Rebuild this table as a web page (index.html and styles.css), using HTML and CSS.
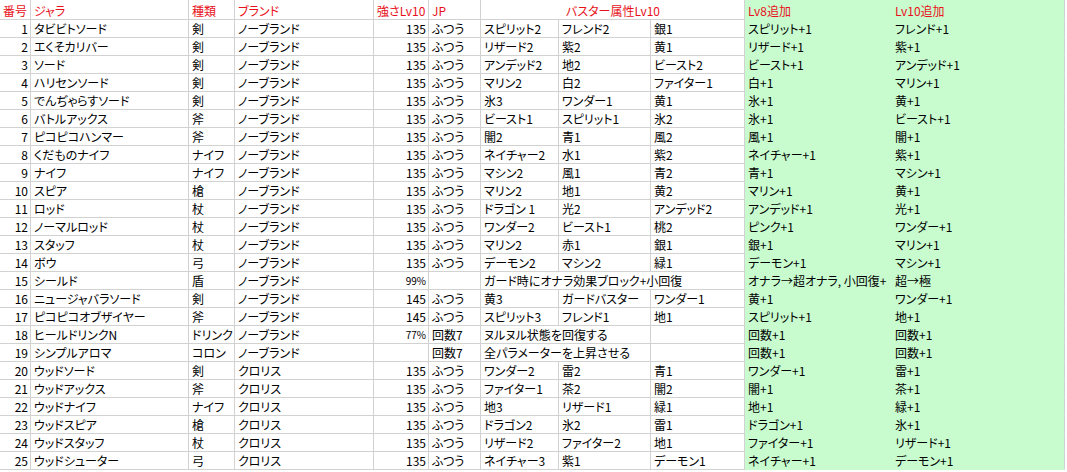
FILE: index.html
```html
<!DOCTYPE html>
<html lang="ja">
<head>
<meta charset="utf-8">
<title>ジャラ一覧</title>
<link rel="stylesheet" href="styles.css">
</head>
<body>
<div class="sheet">
  <div class="c h hd">番号</div><div class="c h hd">ジャラ</div><div class="c h hd">種類</div><div class="c h hd">ブランド</div><div class="c h hd">強さLv10</div><div class="c h hd">JP</div><div class="c h hd s3 ctr">バスター属性Lv10</div><div class="c h hd g">Lv8追加</div><div class="c h hd g last">Lv10追加</div>

  <div class="c r">1</div><div class="c">タビビトソード</div><div class="c">剣</div><div class="c">ノーブランド</div><div class="c r">135</div><div class="c">ふつう</div><div class="c">スピリット2</div><div class="c">フレンド2</div><div class="c">銀1</div><div class="c g">スピリット+1</div><div class="c g last">フレンド+1</div>
  <div class="c r">2</div><div class="c">エくそカリバー</div><div class="c">剣</div><div class="c">ノーブランド</div><div class="c r">135</div><div class="c">ふつう</div><div class="c">リザード2</div><div class="c">紫2</div><div class="c">黄1</div><div class="c g">リザード+1</div><div class="c g last">紫+1</div>
  <div class="c r">3</div><div class="c">ソード</div><div class="c">剣</div><div class="c">ノーブランド</div><div class="c r">135</div><div class="c">ふつう</div><div class="c">アンデッド2</div><div class="c">地2</div><div class="c">ビースト2</div><div class="c g">ビースト+1</div><div class="c g last">アンデッド+1</div>
  <div class="c r">4</div><div class="c">ハリセンソード</div><div class="c">剣</div><div class="c">ノーブランド</div><div class="c r">135</div><div class="c">ふつう</div><div class="c">マリン2</div><div class="c">白2</div><div class="c">ファイター1</div><div class="c g">白+1</div><div class="c g last">マリン+1</div>
  <div class="c r">5</div><div class="c">でんぢゃらすソード</div><div class="c">剣</div><div class="c">ノーブランド</div><div class="c r">135</div><div class="c">ふつう</div><div class="c">氷3</div><div class="c">ワンダー1</div><div class="c">黄1</div><div class="c g">氷+1</div><div class="c g last">黄+1</div>
  <div class="c r">6</div><div class="c">バトルアックス</div><div class="c">斧</div><div class="c">ノーブランド</div><div class="c r">135</div><div class="c">ふつう</div><div class="c">ビースト1</div><div class="c">スピリット1</div><div class="c">氷2</div><div class="c g">氷+1</div><div class="c g last">ビースト+1</div>
  <div class="c r">7</div><div class="c">ピコピコハンマー</div><div class="c">斧</div><div class="c">ノーブランド</div><div class="c r">135</div><div class="c">ふつう</div><div class="c">闇2</div><div class="c">青1</div><div class="c">風2</div><div class="c g">風+1</div><div class="c g last">闇+1</div>
  <div class="c r">8</div><div class="c">くだものナイフ</div><div class="c">ナイフ</div><div class="c">ノーブランド</div><div class="c r">135</div><div class="c">ふつう</div><div class="c">ネイチャー2</div><div class="c">水1</div><div class="c">紫2</div><div class="c g">ネイチャー+1</div><div class="c g last">紫+1</div>
  <div class="c r">9</div><div class="c">ナイフ</div><div class="c">ナイフ</div><div class="c">ノーブランド</div><div class="c r">135</div><div class="c">ふつう</div><div class="c">マシン2</div><div class="c">風1</div><div class="c">青2</div><div class="c g">青+1</div><div class="c g last">マシン+1</div>
  <div class="c r">10</div><div class="c">スピア</div><div class="c">槍</div><div class="c">ノーブランド</div><div class="c r">135</div><div class="c">ふつう</div><div class="c">マリン2</div><div class="c">地1</div><div class="c">黄2</div><div class="c g">マリン+1</div><div class="c g last">黄+1</div>
  <div class="c r">11</div><div class="c">ロッド</div><div class="c">杖</div><div class="c">ノーブランド</div><div class="c r">135</div><div class="c">ふつう</div><div class="c">ドラゴン 1</div><div class="c">光2</div><div class="c">アンデッド2</div><div class="c g">アンデッド+1</div><div class="c g last">光+1</div>
  <div class="c r">12</div><div class="c">ノーマルロッド</div><div class="c">杖</div><div class="c">ノーブランド</div><div class="c r">135</div><div class="c">ふつう</div><div class="c">ワンダー2</div><div class="c">ビースト1</div><div class="c">桃2</div><div class="c g">ピンク+1</div><div class="c g last">ワンダー+1</div>
  <div class="c r">13</div><div class="c">スタッフ</div><div class="c">杖</div><div class="c">ノーブランド</div><div class="c r">135</div><div class="c">ふつう</div><div class="c">マリン2</div><div class="c">赤1</div><div class="c">銀1</div><div class="c g">銀+1</div><div class="c g last">マリン+1</div>
  <div class="c r">14</div><div class="c">ボウ</div><div class="c">弓</div><div class="c">ノーブランド</div><div class="c r">135</div><div class="c">ふつう</div><div class="c">デーモン2</div><div class="c">マシン2</div><div class="c">緑1</div><div class="c g">デーモン+1</div><div class="c g last">マシン+1</div>
  <div class="c r">15</div><div class="c">シールド</div><div class="c">盾</div><div class="c">ノーブランド</div><div class="c r pct">99%</div><div class="c"></div><div class="c s3">ガード時にオナラ効果ブロック+小回復</div><div class="c g">オナラ→超オナラ, 小回復+</div><div class="c g last">超→極</div>
  <div class="c r">16</div><div class="c">ニュージャバラソード</div><div class="c">剣</div><div class="c">ノーブランド</div><div class="c r">145</div><div class="c">ふつう</div><div class="c">黄3</div><div class="c">ガードバスター</div><div class="c">ワンダー1</div><div class="c g">黄+1</div><div class="c g last">ワンダー+1</div>
  <div class="c r">17</div><div class="c">ピコピコオブザイヤー</div><div class="c">斧</div><div class="c">ノーブランド</div><div class="c r">145</div><div class="c">ふつう</div><div class="c">スピリット3</div><div class="c">フレンド1</div><div class="c">地1</div><div class="c g">スピリット+1</div><div class="c g last">地+1</div>
  <div class="c r">18</div><div class="c">ヒールドリンクN</div><div class="c">ドリンク</div><div class="c">ノーブランド</div><div class="c r pct">77%</div><div class="c">回数7</div><div class="c s2">ヌルヌル状態を回復する</div><div class="c"></div><div class="c g">回数+1</div><div class="c g last">回数+1</div>
  <div class="c r">19</div><div class="c">シンプルアロマ</div><div class="c">コロン</div><div class="c">ノーブランド</div><div class="c r"></div><div class="c">回数7</div><div class="c s2">全パラメーターを上昇させる</div><div class="c"></div><div class="c g">回数+1</div><div class="c g last">回数+1</div>
  <div class="c r">20</div><div class="c">ウッドソード</div><div class="c">剣</div><div class="c">クロリス</div><div class="c r">135</div><div class="c">ふつう</div><div class="c">ワンダー2</div><div class="c">雷2</div><div class="c">青1</div><div class="c g">ワンダー+1</div><div class="c g last">雷+1</div>
  <div class="c r">21</div><div class="c">ウッドアックス</div><div class="c">斧</div><div class="c">クロリス</div><div class="c r">135</div><div class="c">ふつう</div><div class="c">ファイター1</div><div class="c">茶2</div><div class="c">闇2</div><div class="c g">闇+1</div><div class="c g last">茶+1</div>
  <div class="c r">22</div><div class="c">ウッドナイフ</div><div class="c">ナイフ</div><div class="c">クロリス</div><div class="c r">135</div><div class="c">ふつう</div><div class="c">地3</div><div class="c">リザード1</div><div class="c">緑1</div><div class="c g">地+1</div><div class="c g last">緑+1</div>
  <div class="c r">23</div><div class="c">ウッドスピア</div><div class="c">槍</div><div class="c">クロリス</div><div class="c r">135</div><div class="c">ふつう</div><div class="c">ドラゴン2</div><div class="c">氷2</div><div class="c">雷1</div><div class="c g">ドラゴン+1</div><div class="c g last">氷+1</div>
  <div class="c r">24</div><div class="c">ウッドスタッフ</div><div class="c">杖</div><div class="c">クロリス</div><div class="c r">135</div><div class="c">ふつう</div><div class="c">リザード2</div><div class="c">ファイター2</div><div class="c">地1</div><div class="c g">ファイター+1</div><div class="c g last">リザード+1</div>
  <div class="c r">25</div><div class="c">ウッドシューター</div><div class="c">弓</div><div class="c">クロリス</div><div class="c r">135</div><div class="c">ふつう</div><div class="c">ネイチャー3</div><div class="c">紫1</div><div class="c">デーモン1</div><div class="c g">ネイチャー+1</div><div class="c g last">デーモン+1</div>
</div>
</body>
</html>
```
FILE: styles.css
```css
html, body {
  margin: 0;
  padding: 0;
  background: #ffffff;
}

.sheet {
  display: grid;
  grid-template-columns: 31px 158px 46px 139px 55px 52px 78px 92px 94px 147px 173px;
  grid-template-rows: 20px;
  grid-auto-rows: 18px;
  font-family: "Noto Sans CJK JP", "Noto Sans", sans-serif;
  font-feature-settings: "palt";
  font-size: 12px;
  color: #000;
}

.c {
  box-sizing: border-box;
  border-right: 1px solid #d2d2d2;
  border-bottom: 1px solid #d2d2d2;
  padding: 0 2px 0 3px;
  line-height: 17px;
  white-space: nowrap;
  overflow: visible;
}

.hd {
  line-height: 21px;
}

.h {
  color: #e8101a;
}

.r {
  text-align: right;
}

.pct {
  font-size: 10px;
}

.ctr {
  text-align: center;
}

.s3 {
  grid-column: span 3;
}

.s2 {
  grid-column: span 2;
}

.g {
  background: #c8fccf;
  border-right-color: #c8fccf;
  border-bottom-color: #c8fccf;
}

.g.last {
  border-right-color: #d2d2d2;
}
```
